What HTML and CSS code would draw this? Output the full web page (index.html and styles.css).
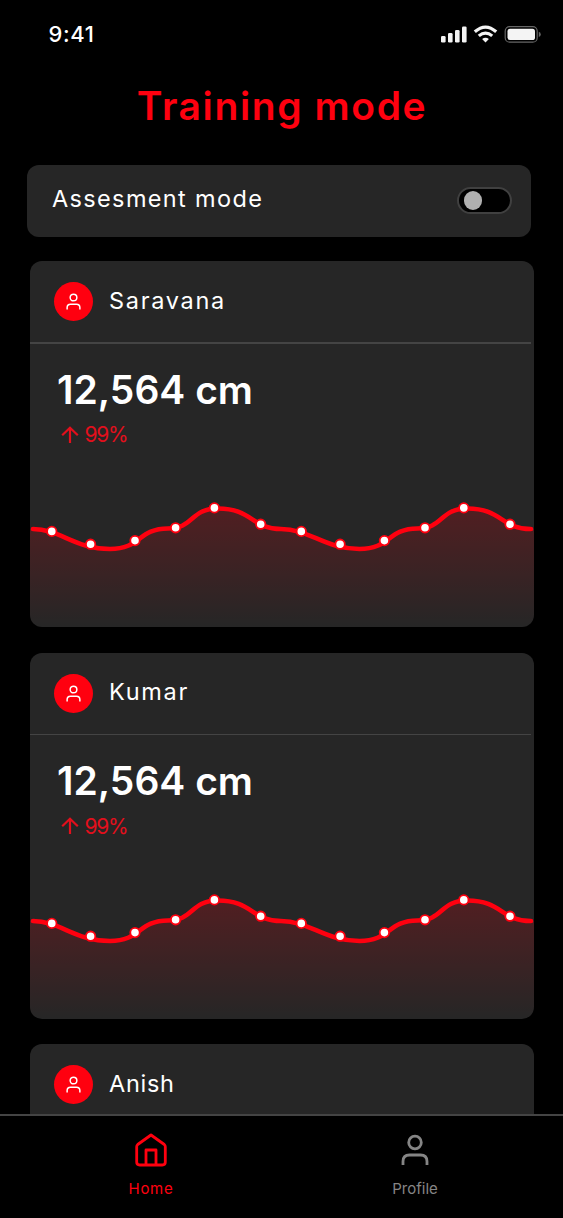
FILE: index.html
```html
<!DOCTYPE html>
<html lang="en">
<head>
  <meta charset="UTF-8">
  <meta name="viewport" content="width=device-width, initial-scale=1.0">
  <title>Training mode</title>
  <link rel="stylesheet" href="styles.css">
</head>
<body>
  <!-- Shared shapes -->
  <svg class="defs" width="0" height="0">
    <defs>
      <linearGradient id="fade" x1="0" y1="8" x2="0" y2="127" gradientUnits="userSpaceOnUse">
        <stop offset="0" stop-color="#ff000f" stop-opacity="0.2"/>
        <stop offset="1" stop-color="#ff000f" stop-opacity="0"/>
      </linearGradient>
    </defs>
    <symbol id="user" viewBox="0 0 28 32">
      <circle cx="14" cy="8.5" r="6.3"/>
      <path d="M2 31V27.5Q2 21 8.5 21H19.5Q26 21 26 27.5V31"/>
    </symbol>
    <symbol id="arrow" viewBox="0 0 18 18">
      <path d="M9 17V2M1.2 9.3L9 1.7L16.800 9.3"/>
    </symbol>
    <symbol id="chart" viewBox="0 0 504 127">
      <path fill="url(#fade)" d="M0 29C30 29 45 49 80 49C111 49 108 28.5 138 28.5C164 28.5 160 8.5 188 8.5C222 8.5 222 29 251 29C279.5 29 294.5 49 329.5 49C360.5 49 357.5 28.5 387.5 28.5C413.5 28.5 409.5 8.5 437.5 8.5C471.5 8.5 471.5 29 500.5 29H504V127H0Z"/>
      <path fill="none" stroke="#ff000f" stroke-width="4.6" stroke-linecap="round" d="M3 29C30 29 45 49 80 49C111 49 108 28.5 138 28.5C164 28.5 160 8.5 188 8.5C222 8.5 222 29 251 29C279.5 29 294.5 49 329.5 49C360.5 49 357.5 28.5 387.5 28.5C413.5 28.5 409.5 8.5 437.5 8.5C471.5 8.5 471.5 29 500.5 29H501"/>
      <g fill="#fff" stroke="#ff000f" stroke-width="1.8">
        <circle cx="21.8" cy="31.4" r="4.7"/>
        <circle cx="60.6" cy="44.2" r="4.7"/>
        <circle cx="105" cy="40.6" r="4.7"/>
        <circle cx="145.6" cy="27.8" r="4.7"/>
        <circle cx="184.4" cy="7.9" r="4.7"/>
        <circle cx="230.7" cy="24.2" r="4.7"/>
        <circle cx="271.3" cy="31.4" r="4.7"/>
        <circle cx="310.1" cy="44.2" r="4.7"/>
        <circle cx="354.4" cy="40.6" r="4.7"/>
        <circle cx="395" cy="27.8" r="4.7"/>
        <circle cx="433.8" cy="7.9" r="4.7"/>
        <circle cx="480" cy="24.2" r="4.7"/>
      </g>
    </symbol>
  </svg>

  <div class="screen">
    <!-- Status bar -->
    <div class="status">
      <span class="time">9:41</span>
      <svg class="status-icons" viewBox="0 0 101 20" fill="#f4f4f4">
        <rect x="1" y="13" width="4.6" height="6.5" rx="1.3"/>
        <rect x="8" y="10" width="4.6" height="9.5" rx="1.3"/>
        <rect x="15" y="7" width="4.6" height="12.5" rx="1.3"/>
        <rect x="22" y="3.5" width="4.6" height="16" rx="1.3"/>
        <g fill="none" stroke="#f4f4f4" stroke-width="3.2">
          <path d="M34.8 8.8Q45.5 -0.6 56.2 8.8"/>
          <path d="M38.8 12.9Q45.5 7.2 52.2 12.9"/>
        </g>
        <path d="M42.1 16.1Q45.5 13.3 48.9 16.1L45.5 19.6Z"/>
        <rect x="65.2" y="3.6" width="32" height="15.6" rx="4.5" fill="none" stroke="#666" stroke-width="1.2"/>
        <rect x="67.5" y="5.7" width="27.5" height="11.4" rx="2.6"/>
        <path d="M98.8 8.8Q100.8 9.5 100.8 11.4T98.8 14Z" fill="#666"/>
      </svg>
    </div>

    <h1 class="title">Training mode</h1>

    <div class="mode">
      <span class="mode-label">Assesment mode</span>
      <span class="toggle"><span class="knob"></span></span>
    </div>

    <!-- Trainee cards -->
    <div class="cards">
      <div class="card">
        <div class="card-head">
          <span class="avatar"><svg><use href="#user"/></svg></span>
          <span class="name">Saravana</span>
        </div>
        <div class="line"></div>
        <div class="stats">
          <div class="value">12,564 cm</div>
          <div class="change"><svg><use href="#arrow"/></svg><span>99%</span></div>
        </div>
        <svg class="chart"><use href="#chart"/></svg>
      </div>

      <div class="card">
        <div class="card-head">
          <span class="avatar"><svg><use href="#user"/></svg></span>
          <span class="name">Kumar</span>
        </div>
        <div class="line"></div>
        <div class="stats">
          <div class="value">12,564 cm</div>
          <div class="change"><svg><use href="#arrow"/></svg><span>99%</span></div>
        </div>
        <svg class="chart"><use href="#chart"/></svg>
      </div>

      <div class="card">
        <div class="card-head">
          <span class="avatar"><svg><use href="#user"/></svg></span>
          <span class="name name-tight">Anish</span>
        </div>
      </div>
    </div>

    <!-- Bottom navigation -->
    <div class="tabbar">
      <div class="tab active">
        <svg class="tab-icon" viewBox="0 0 32 34">
          <path d="M16 2L29.3 11.5Q30.3 12.3 30.3 13.8V29Q30.3 32 27.3 32H4.7Q1.7 32 1.7 29V13.8Q1.7 12.3 2.7 11.5Z"/>
          <path d="M11 32V17H21V32"/>
        </svg>
        <span>Home</span>
      </div>
      <div class="tab">
        <svg class="tab-icon profile-icon"><use href="#user"/></svg>
        <span>Profile</span>
      </div>
    </div>
  </div>
</body>
</html>
```
FILE: styles.css
```css
* {
  box-sizing: border-box;
}

body {
  margin: 0;
  background-color: #000;
  color: #fff;
  font-family: Inter, "Open Sans", sans-serif;
}

svg {
  display: block;
}

.defs {
  position: absolute;
}

.screen {
  display: flex;
  flex-direction: column;
  width: 563px;
  height: 1218px;
  overflow: hidden;
}

.status {
  display: flex;
  justify-content: space-between;
  align-items: center;
  height: 68px;
  padding: 0 22px 0 48.5px;
  flex-shrink: 0;
}

.time {
  font-size: 22px;
  font-weight: 500;
  letter-spacing: 0.6px;
}

.status-icons {
  width: 101px;
  height: 20px;
  margin-bottom: 2px;
}

.title {
  margin: 0;
  height: 97px;
  line-height: 76px;
  padding-left: 1px;
  text-align: center;
  font-size: 39px;
  font-weight: 600;
  letter-spacing: 1.6px;
  color: #ff000f;
  flex-shrink: 0;
}

.mode {
  display: flex;
  justify-content: space-between;
  align-items: center;
  width: 504px;
  height: 72px;
  margin-left: 27px;
  padding: 0 19px 0 25px;
  background-color: #262626;
  border-radius: 12px;
  flex-shrink: 0;
}

.mode-label {
  font-size: 23.5px;
  line-height: 30px;
  letter-spacing: 1.35px;
  padding-bottom: 5px;
}

.toggle {
  display: flex;
  align-items: center;
  width: 55px;
  height: 27px;
  margin-bottom: 1px;
  padding-left: 4.5px;
  background-color: #000;
  border: 2px solid #404040;
  border-radius: 14px;
}

.knob {
  width: 18.5px;
  height: 18.5px;
  border-radius: 50%;
  background-color: #b0b0b0;
}

.cards {
  display: flex;
  flex-direction: column;
  gap: 25.5px;
  flex: 1;
  min-height: 0;
  margin-top: 24px;
  padding-left: 30px;
  overflow: hidden;
}

.card {
  display: flex;
  flex-direction: column;
  width: 504px;
  height: 366px;
  background-color: #262626;
  border-radius: 12px;
  overflow: hidden;
  flex-shrink: 0;
}

.card-head {
  display: flex;
  align-items: center;
  gap: 16px;
  height: 81px;
  padding-left: 24px;
}

.avatar {
  display: flex;
  align-items: center;
  justify-content: center;
  width: 39px;
  height: 39px;
  border-radius: 50%;
  background-color: #ff000f;
}

.avatar svg {
  width: 15px;
  height: 17px;
  fill: none;
  stroke: #fff;
  stroke-width: 2.8;
}

.name {
  font-size: 23.5px;
  line-height: 36px;
  letter-spacing: 1.7px;
  padding-bottom: 2px;
}

.name-tight {
  letter-spacing: 0.7px;
}

.line {
  width: 501px;
  height: 1.5px;
  background-color: #444;
}

.stats {
  flex: 1;
  padding: 20px 0 0 27px;
}

.value {
  font-size: 39px;
  font-weight: 600;
  line-height: 52px;
}

.change {
  display: flex;
  align-items: center;
  gap: 6px;
  height: 38px;
  padding-left: 3.5px;
  font-size: 21px;
  letter-spacing: -1.3px;
  color: #e30f1c;
}

.change svg {
  width: 18px;
  height: 18px;
  fill: none;
  stroke: currentColor;
  stroke-width: 2.2;
}

.chart {
  width: 504px;
  height: 127px;
  flex-shrink: 0;
}

.tabbar {
  display: flex;
  height: 104px;
  padding: 0 16px 0 19px;
  border-top: 2px solid #444;
  background-color: #000;
  flex-shrink: 0;
}

.tab {
  display: flex;
  flex-direction: column;
  align-items: center;
  flex: 1;
  padding-top: 17px;
  font-size: 15px;
  line-height: 20px;
  color: #858585;
}

.tab.active {
  color: #ff000f;
  letter-spacing: 0.7px;
}

.tab-icon {
  width: 32px;
  height: 34px;
  margin-bottom: 12px;
  fill: none;
  stroke: currentColor;
  stroke-width: 2.8;
  stroke-linejoin: round;
}

.profile-icon {
  width: 28px;
  height: 32px;
  margin: 1px 0 13px;
}
```
